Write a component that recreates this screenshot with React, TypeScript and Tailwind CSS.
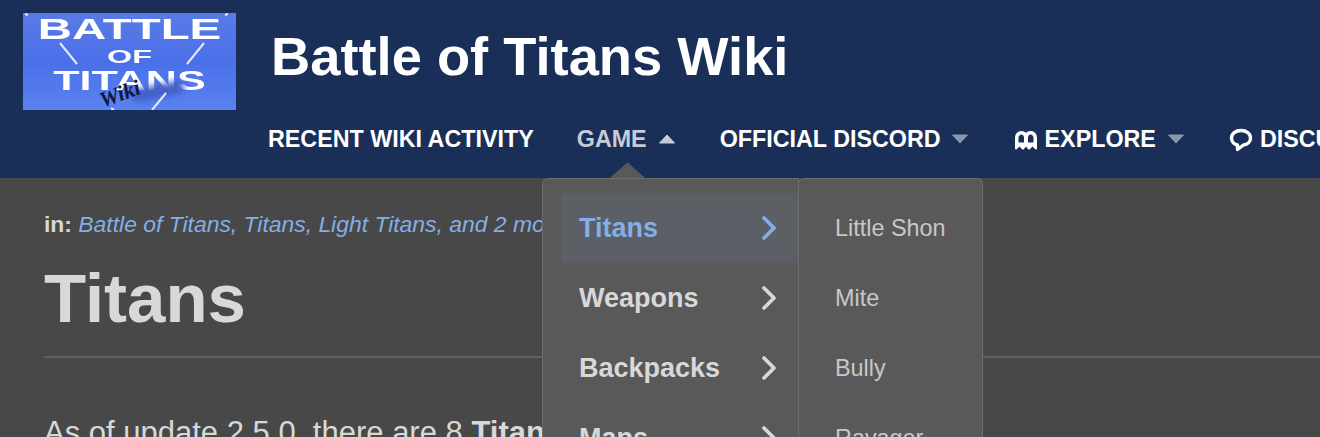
import { ChevronRight } from "lucide-react";

const mainItems = ["Titans", "Weapons", "Backpacks", "Maps"];
const subItems = ["Little Shon", "Mite", "Bully", "Ravager"];

const Caret = ({ up, className }: { up?: boolean; className: string }) => (
  <svg width="16" height="10" viewBox="0 0 16 10" className={`shrink-0 ${className}`} preserveAspectRatio="none">
    <path
      d={up ? "M8 1 L15.5 9 H0.5 Z" : "M0.5 1 H15.5 L8 9 Z"}
      fill="currentColor"
      stroke="currentColor"
      strokeLinejoin="round"
    />
  </svg>
);

const Logo = () => (
  <div className="relative shrink-0 w-[213px] h-[97px] overflow-hidden bg-gradient-to-b from-[#5a7be6] via-[#4a70e8] to-[#5a82f0] text-white font-['Liberation_Sans',sans-serif] font-bold text-center">
    <div className="blur-[0.6px]">
      <div className="text-[30px] leading-none pt-[1px] scale-x-[1.58]">BATTLE</div>
      <div className="text-[19px] leading-none mt-[3px] scale-x-[1.7]">OF</div>
      <div className="text-[28px] leading-none mt-[1px] scale-x-[1.54]">TITANS</div>
    </div>
    <div className="absolute left-[108px] top-[72px] w-[54px] h-[13px] rounded-full bg-[#4560c8] blur-[3px] -rotate-12" />
    <div className="absolute left-[76px] top-[70px] text-[22px] leading-none italic font-bold text-[#101a40] font-['Liberation_Serif',serif] -rotate-[20deg]">
      Wiki
    </div>
    <svg viewBox="0 0 213 97" className="absolute inset-0 w-full h-full">
      <path
        d="M37 30 L54 51 M181 30 L164 51 M143 80 L129 97 M2 1 L5 2 M88 95 L91 97 M202 2 L205 1"
        stroke="#fff"
        strokeWidth="2"
        opacity="0.85"
      />
    </svg>
  </div>
);

const App = () => {
  return (
    <div className="relative h-[437px] w-[1320px] overflow-hidden bg-[#484848] font-['Liberation_Sans',sans-serif]">
      <header className="h-[178px] bg-[#1a2f57] pt-[13px] text-white">
        <div className="flex items-center h-[97px] pl-[23px]">
          <Logo />
          <h1 className="ml-[35px] -mt-[9px] text-[54.3px] leading-none font-bold whitespace-nowrap">Battle of Titans Wiki</h1>
        </div>
        <nav className="flex items-center h-[30px] mt-[14px] pl-[268px] text-[23.3px] font-bold whitespace-nowrap overflow-hidden">
          <span>RECENT WIKI ACTIVITY</span>
          <span className="ml-[43px] text-[#c6ccd6]">GAME</span>
          <Caret up className="ml-[12px] text-[#c6ccd6]" />
          <span className="ml-[45px]">OFFICIAL DISCORD</span>
          <Caret className="ml-[11px] text-[#8b97ab]" />
          <svg width="24" height="20" viewBox="0 0 24 20" className="ml-[46px] mt-[1px] shrink-0" fill="#fff">
            <path
              d="M1 18.5 V8 C1 3.5 4 1 7.5 1 C9.5 1 11 1.8 12 3 C13 1.8 14.5 1 16.5 1 C20 1 23 3.5 23 8 V18.5 C23 19.5 22 19.8 21.4 19.2 L18.5 16.5 L15.8 19.2 C15.2 19.8 14.4 19.6 14 19 L12 16.5 L10 19 C9.6 19.6 8.8 19.8 8.2 19.2 L5.5 16.5 L2.6 19.2 C2 19.8 1 19.5 1 18.5 Z M4.5 12.5 V8 C4.5 6 6 4.5 7.5 4.5 C9 4.5 10 6 10 8 V12.5 Z M14 12.5 V8 C14 6 15 4.5 16.5 4.5 C18 4.5 19.5 6 19.5 8 V12.5 Z"
              fillRule="evenodd"
            />
          </svg>
          <span className="ml-[7px] pt-[1px]">EXPLORE</span>
          <Caret className="ml-[12px] text-[#8b97ab]" />
          <svg width="24" height="24" viewBox="0 0 24 24" className="ml-[45px] mt-[1px] shrink-0">
            <path
              d="M12 2.5 C6.5 2.5 2.5 5.5 2.5 10 C2.5 14 5.5 16.5 8.5 17 V21.5 L14.5 17 C18.5 16.5 21.5 14 21.5 10 C21.5 5.5 17.5 2.5 12 2.5 Z"
              fill="none"
              stroke="#fff"
              strokeWidth="3.4"
              strokeLinejoin="round"
            />
          </svg>
          <span className="ml-[7px] pt-[1px]">DISCUSS</span>
        </nav>
      </header>

      <main className="pl-[44px] text-[#d8d8d8]">
        <p className="pt-[32px] text-[22.9px] leading-[28px] whitespace-nowrap">
          <b>in:</b>{" "}
          <i className="text-[#85aee6]">Battle of Titans, Titans, Light Titans, and 2 more</i>
        </p>
        <h2 className="mt-[25px] text-[69px] leading-[72px] font-bold">Titans</h2>
        <div className="mt-[21px] h-[2px] bg-[#616161]" />
        <p className="mt-[57px] text-[31px] leading-[36px] whitespace-nowrap">
          As of update 2.5.0, there are 8 <b>Titans</b>
        </p>
      </main>

      <Caret up className="absolute left-[611px] top-[162px] w-[33px] h-[17px] text-[#595959]" />
      <div className="absolute left-[542px] top-[178px] flex h-[300px]">
        <div className="w-[257px] rounded-tl-[6px] border border-b-0 border-[#6c6c6c] bg-[#595959] pl-[18px] pt-[14px]">
          {mainItems.map((item, i) => (
            <div
              key={item}
              className={
                i === 0
                  ? "flex h-[70px] items-center justify-between pl-[18px] pr-[9px] bg-[#5c6066] text-[#85aee6]"
                  : "flex h-[70px] items-center justify-between pl-[18px] pr-[9px] text-[#d8d8d8]"
              }
            >
              <span className="mt-[1px] text-[27px] font-bold">{item}</span>
              <ChevronRight className="w-[40px] h-[40px]" strokeWidth={2.2} />
            </div>
          ))}
        </div>
        <div className="w-[185px] rounded-t-[6px] border border-b-0 border-[#6c6c6c] bg-[#595959] pl-[36px] pt-[14px] -ml-px">
          {subItems.map((item) => (
            <div key={item} className="flex h-[70px] items-center pt-[1px] text-[23.4px] text-[#c8c8c8]">
              {item}
            </div>
          ))}
        </div>
      </div>
    </div>
  );
};

export default App;
